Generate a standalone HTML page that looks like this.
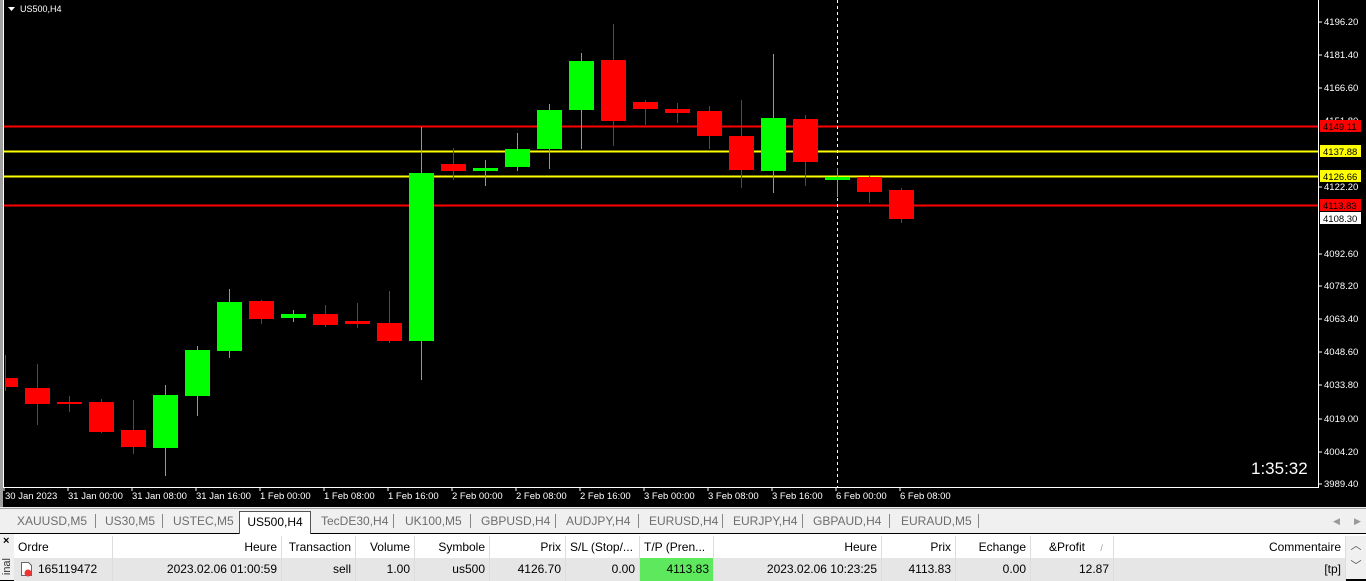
<!DOCTYPE html>
<html><head><meta charset="utf-8"><style>
*{margin:0;padding:0;box-sizing:border-box}
body{width:1366px;height:577px;overflow:hidden;background:#000;font-family:"Liberation Sans",sans-serif;position:relative}
svg{position:absolute;left:0;top:0}
.tabs{position:absolute;left:0;top:508px;width:1366px;height:25px;background:#f0f0f0;border-top:1px solid #a0a0a0;font-size:12px;color:#6d6d6d}
.tab{position:absolute;top:5px}
.sep{position:absolute;top:5px;width:1px;height:14px;background:#888}
.act{position:absolute;left:239px;top:2px;width:72px;height:23px;background:#fff;border:1px solid #555;border-bottom:none;color:#000;text-align:center;line-height:21px}
.tbl{position:absolute;left:0;top:534px;width:1366px;height:43px;background:#fff;font-size:12px;color:#000}
.side{position:absolute;left:0;top:0;width:14px;height:46px;background:#f0f0f0}
.hdr,.row{position:absolute;left:14px;width:1332px;height:23px}
.hdr{top:2px;background:#fff;border-bottom:1px solid #ddd}
.row{top:24px;background:#e6e6e6}
.c{position:absolute;top:0;height:23px;line-height:22px;padding:0 4px;border-right:1px solid #ddd;white-space:nowrap;overflow:hidden;text-align:right}
.l{text-align:left}
.sb{position:absolute;left:1346px;top:2px;width:20px;height:43px;background:#f0f0f0;color:#555;font-size:11px;text-align:center}
</style></head><body>
<svg width="1366" height="510" font-family="Liberation Sans, sans-serif">
<rect x="0" y="0" width="3" height="510" fill="#a0a0a0"/>
<rect x="3" y="0" width="1" height="488" fill="#fff"/>
<rect x="4" y="487" width="1315" height="1" fill="#fff"/>
<rect x="1318" y="0" width="1" height="488" fill="#fff"/>
<rect x="0" y="507" width="1366" height="3" fill="#f0f0f0"/>
<polygon points="8,7 15,7 11.5,11" fill="#fff"/>
<text x="20" y="12" font-size="9" fill="#fff">US500,H4</text>
<rect x="4" y="125.5" width="1314" height="2" fill="#f00"/>
<rect x="4" y="150.5" width="1314" height="2" fill="#ff0"/>
<rect x="4" y="175.5" width="1314" height="2" fill="#ff0"/>
<rect x="4" y="204.5" width="1314" height="2" fill="#f00"/>
<line x1="837.5" y1="0" x2="837.5" y2="487" stroke="#fff" stroke-dasharray="3,3"/>
<g fill="#f00">
<rect x="5" y="355" width="1" height="36"/><rect x="5" y="378" width="13" height="9"/>
<rect x="37" y="364" width="1" height="61"/><rect x="25" y="388" width="25" height="16"/>
<rect x="69" y="396" width="1" height="16"/><rect x="57" y="402" width="25" height="2"/>
<rect x="101" y="399" width="1" height="34"/><rect x="89" y="402" width="25" height="30"/>
<rect x="133" y="400" width="1" height="54"/><rect x="121" y="430" width="25" height="17"/>
<rect x="261" y="300" width="1" height="24"/><rect x="249" y="301" width="25" height="18"/>
<rect x="325" y="305" width="1" height="22"/><rect x="313" y="314" width="25" height="11"/>
<rect x="357" y="303" width="1" height="25"/><rect x="345" y="321" width="25" height="3"/>
<rect x="389" y="291" width="1" height="52"/><rect x="377" y="323" width="25" height="18"/>
<rect x="453" y="148" width="1" height="32"/><rect x="441" y="164" width="25" height="7"/>
<rect x="613" y="24" width="1" height="122"/><rect x="601" y="60" width="25" height="61"/>
<rect x="645" y="100" width="1" height="25"/><rect x="633" y="102" width="25" height="7"/>
<rect x="677" y="103" width="1" height="20"/><rect x="665" y="109" width="25" height="4"/>
<rect x="709" y="106" width="1" height="43"/><rect x="697" y="111" width="25" height="25"/>
<rect x="741" y="100" width="1" height="88"/><rect x="729" y="136" width="25" height="34"/>
<rect x="805" y="115" width="1" height="71"/><rect x="793" y="119" width="25" height="43"/>
<rect x="869" y="175" width="1" height="28"/><rect x="857" y="177" width="25" height="15"/>
<rect x="901" y="188" width="1" height="35"/><rect x="889" y="190" width="25" height="29"/>
</g>
<g fill="#0f0">
<rect x="165" y="385" width="1" height="91"/><rect x="153" y="395" width="25" height="53"/>
<rect x="197" y="346" width="1" height="70"/><rect x="185" y="350" width="25" height="46"/>
<rect x="229" y="289" width="1" height="69"/><rect x="217" y="302" width="25" height="49"/>
<rect x="293" y="310" width="1" height="12"/><rect x="281" y="314" width="25" height="4"/>
<rect x="421" y="127" width="1" height="253"/><rect x="409" y="173" width="25" height="168"/>
<rect x="485" y="160" width="1" height="26"/><rect x="473" y="168" width="25" height="3"/>
<rect x="517" y="133" width="1" height="38"/><rect x="505" y="149" width="25" height="18"/>
<rect x="549" y="104" width="1" height="65"/><rect x="537" y="110" width="25" height="39"/>
<rect x="581" y="53" width="1" height="96"/><rect x="569" y="61" width="25" height="49"/>
<rect x="773" y="54" width="1" height="139"/><rect x="761" y="118" width="25" height="53"/>
<rect x="837" y="168" width="1" height="29"/><rect x="825" y="177" width="25" height="3"/>
</g>
<g font-size="9.5" fill="#fff">
<g stroke="#fff"><line x1="1318" y1="22" x2="1322" y2="22"/><line x1="1318" y1="55" x2="1322" y2="55"/><line x1="1318" y1="88" x2="1322" y2="88"/><line x1="1318" y1="187" x2="1322" y2="187"/><line x1="1318" y1="254" x2="1322" y2="254"/><line x1="1318" y1="286" x2="1322" y2="286"/><line x1="1318" y1="319" x2="1322" y2="319"/><line x1="1318" y1="352" x2="1322" y2="352"/><line x1="1318" y1="385" x2="1322" y2="385"/><line x1="1318" y1="419" x2="1322" y2="419"/><line x1="1318" y1="452" x2="1322" y2="452"/><line x1="1318" y1="484" x2="1322" y2="484"/></g>
<text x="1324" y="25">4196.20</text><text x="1324" y="58">4181.40</text><text x="1324" y="91">4166.60</text>
<text x="1324" y="124">4151.80</text><text x="1324" y="190">4122.20</text><text x="1324" y="257">4092.60</text>
<text x="1324" y="289">4078.20</text><text x="1324" y="322">4063.40</text><text x="1324" y="355">4048.60</text>
<text x="1324" y="388">4033.80</text><text x="1324" y="422">4019.00</text><text x="1324" y="455">4004.20</text>
<text x="1324" y="487">3989.40</text>
</g>
<rect x="1320" y="120" width="41" height="12" fill="#f00"/><text x="1323" y="130" font-size="9.5" fill="#000">4149.11</text>
<rect x="1320" y="145" width="41" height="12" fill="#ff0"/><text x="1323" y="155" font-size="9.5" fill="#000">4137.88</text>
<rect x="1320" y="170" width="41" height="12" fill="#ff0"/><text x="1323" y="180" font-size="9.5" fill="#000">4126.66</text>
<rect x="1320" y="199" width="41" height="12" fill="#f00"/><text x="1323" y="209" font-size="9.5" fill="#000">4113.83</text>
<rect x="1320" y="212" width="41" height="12" fill="#fff"/><text x="1323" y="222" font-size="9.5" fill="#000">4108.30</text>
<text x="1251" y="474" font-size="17" fill="#fff">1:35:32</text>
<g font-size="9.5" fill="#fff">
<text x="5" y="499">30 Jan 2023</text><text x="68" y="499">31 Jan 00:00</text><text x="132" y="499">31 Jan 08:00</text>
<text x="196" y="499">31 Jan 16:00</text><text x="260" y="499">1 Feb 00:00</text><text x="324" y="499">1 Feb 08:00</text>
<text x="388" y="499">1 Feb 16:00</text><text x="452" y="499">2 Feb 00:00</text><text x="516" y="499">2 Feb 08:00</text>
<text x="580" y="499">2 Feb 16:00</text><text x="644" y="499">3 Feb 00:00</text><text x="708" y="499">3 Feb 08:00</text>
<text x="772" y="499">3 Feb 16:00</text><text x="836" y="499">6 Feb 00:00</text><text x="900" y="499">6 Feb 08:00</text>
</g>
<g stroke="#fff"><line x1="4" y1="487" x2="4" y2="491"/><line x1="68" y1="487" x2="68" y2="491"/><line x1="132" y1="487" x2="132" y2="491"/><line x1="196" y1="487" x2="196" y2="491"/><line x1="260" y1="487" x2="260" y2="491"/><line x1="324" y1="487" x2="324" y2="491"/><line x1="388" y1="487" x2="388" y2="491"/><line x1="452" y1="487" x2="452" y2="491"/><line x1="516" y1="487" x2="516" y2="491"/><line x1="580" y1="487" x2="580" y2="491"/><line x1="644" y1="487" x2="644" y2="491"/><line x1="708" y1="487" x2="708" y2="491"/><line x1="772" y1="487" x2="772" y2="491"/><line x1="836" y1="487" x2="836" y2="491"/><line x1="900" y1="487" x2="900" y2="491"/></g>
</svg>
<div class="tabs">
<span class="tab" style="left:17px">XAUUSD,M5</span><div class="sep" style="left:95px"></div>
<span class="tab" style="left:105px">US30,M5</span><div class="sep" style="left:162px"></div>
<span class="tab" style="left:173px">USTEC,M5</span>
<div class="act">US500,H4</div>
<span class="tab" style="left:321px">TecDE30,H4</span><div class="sep" style="left:393px"></div>
<span class="tab" style="left:405px">UK100,M5</span><div class="sep" style="left:470px"></div>
<span class="tab" style="left:481px">GBPUSD,H4</span><div class="sep" style="left:555px"></div>
<span class="tab" style="left:566px">AUDJPY,H4</span><div class="sep" style="left:638px"></div>
<span class="tab" style="left:649px">EURUSD,H4</span><div class="sep" style="left:722px"></div>
<span class="tab" style="left:733px">EURJPY,H4</span><div class="sep" style="left:802px"></div>
<span class="tab" style="left:813px">GBPAUD,H4</span><div class="sep" style="left:889px"></div>
<span class="tab" style="left:901px">EURAUD,M5</span><div class="sep" style="left:978px"></div>
<span class="tab" style="left:1333px;font-size:9px;top:7px;color:#999">◀</span><span class="tab" style="left:1354px;font-size:9px;top:7px;color:#999">▶</span>
</div>
<div class="tbl">
<div class="side"><div style="font-size:11px;font-weight:bold;padding-left:3px;line-height:14px">×</div><div style="position:absolute;left:1px;top:24px;font-size:11px;writing-mode:vertical-rl;transform:rotate(180deg);color:#333">inal</div></div>
<div class="hdr">
<div class="c l" style="left:0;width:99px">Ordre</div>
<div class="c" style="left:99px;width:169px">Heure</div>
<div class="c" style="left:268px;width:74px">Transaction</div>
<div class="c" style="left:342px;width:59px">Volume</div>
<div class="c" style="left:401px;width:75px">Symbole</div>
<div class="c" style="left:476px;width:76px">Prix</div>
<div class="c l" style="left:552px;width:74px">S/L (Stop/...</div>
<div class="c l" style="left:626px;width:74px">T/P (Pren...</div>
<div class="c" style="left:700px;width:168px">Heure</div>
<div class="c" style="left:868px;width:74px">Prix</div>
<div class="c" style="left:942px;width:75px">Echange</div>
<div class="c l" style="left:1017px;width:83px;padding-left:18px">&amp;Profit <span style="color:#999;font-size:9px;margin-left:12px">/</span></div>
<div class="c" style="left:1100px;width:232px">Commentaire</div>
</div>
<div class="row">
<div class="c l" style="left:0;width:99px;padding-left:24px"><svg width="13" height="15" style="left:6px;top:4px"><path d="M1.5 .5h7l3 3v10h-10z" fill="#fff" stroke="#666"/><circle cx="8" cy="11" r="3.5" fill="#e33"/></svg>165119472</div>
<div class="c" style="left:99px;width:169px">2023.02.06 01:00:59</div>
<div class="c" style="left:268px;width:74px">sell</div>
<div class="c" style="left:342px;width:59px">1.00</div>
<div class="c" style="left:401px;width:75px">us500</div>
<div class="c" style="left:476px;width:76px">4126.70</div>
<div class="c" style="left:552px;width:74px">0.00</div>
<div class="c" style="left:626px;width:74px;background:#5ee85e">4113.83</div>
<div class="c" style="left:700px;width:168px">2023.02.06 10:23:25</div>
<div class="c" style="left:868px;width:74px">4113.83</div>
<div class="c" style="left:942px;width:75px">0.00</div>
<div class="c" style="left:1017px;width:83px">12.87</div>
<div class="c" style="left:1100px;width:232px">[tp]</div>
</div>
<div class="sb"><div style="line-height:20px">︿</div><div style="line-height:20px">﹀</div></div>
</div>
</body></html>
